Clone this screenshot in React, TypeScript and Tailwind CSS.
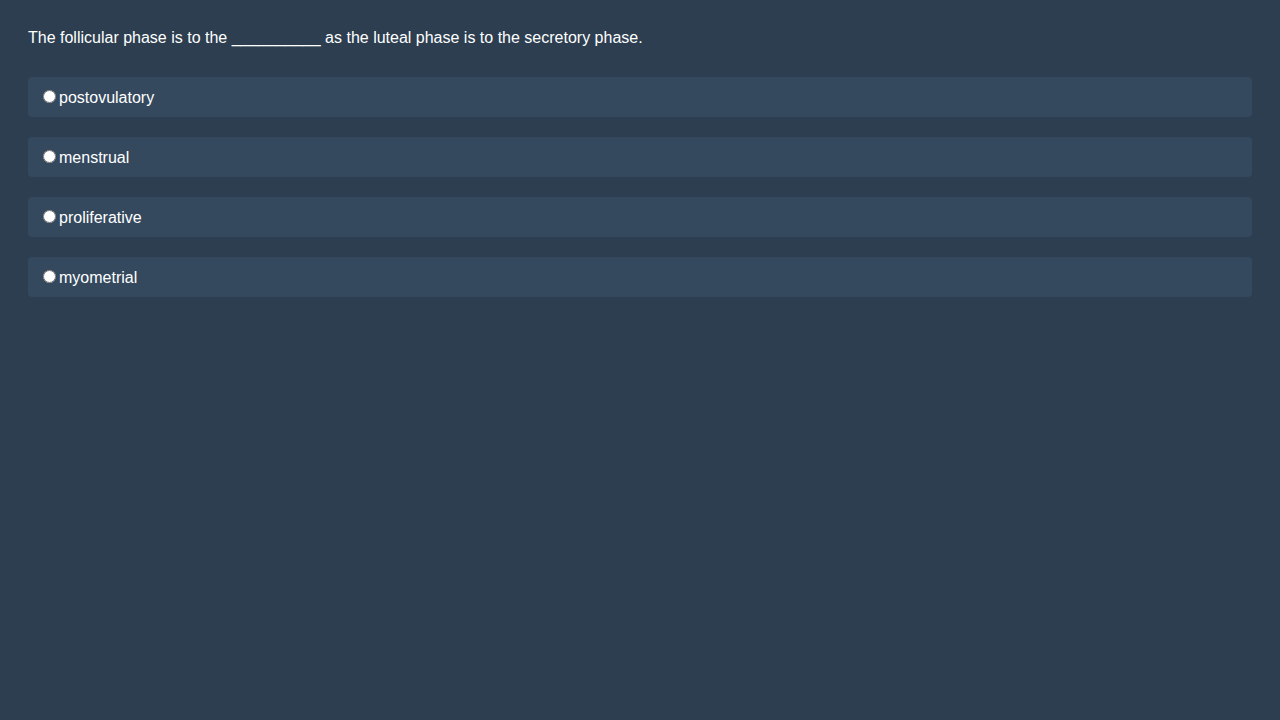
import React from "react";

const options = ["postovulatory", "menstrual", "proliferative", "myometrial"];

export default function App() {
  return (
    <div
      className="min-h-screen w-full bg-[#2c3e50] px-[28px] pt-[29px] pb-[28px] text-white"
      style={{ fontFamily: '"Liberation Sans", Arial, sans-serif' }}
    >
      <p className="text-[16px] leading-[18px] mb-[30px]">
        The follicular phase is to the __________ as the luteal phase is to the secretory phase.
      </p>
      <div className="flex flex-col gap-[20px]">
        {options.map((o) => (
          <label
            key={o}
            className="block h-[40px] rounded-[4px] bg-[#34495e] px-[10px] pt-[12px] text-[16px] leading-[18px]"
          >
            <input type="radio" name="q" className="ml-[5px] mr-[3px] h-[13px] w-[13px] align-baseline" />
            <span>{o}</span>
          </label>
        ))}
      </div>
    </div>
  );
}
